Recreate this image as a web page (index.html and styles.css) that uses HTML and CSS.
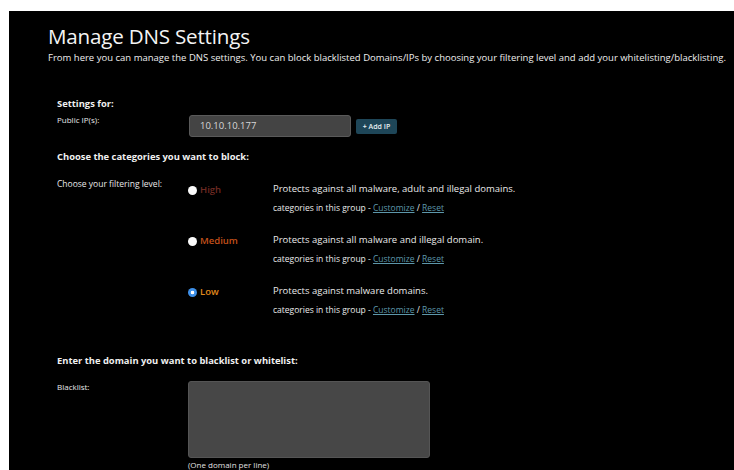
FILE: index.html
```html
<!DOCTYPE html>
<html lang="en">
<head>
<meta charset="utf-8">
<title>Manage DNS Settings</title>
<link rel="stylesheet" href="styles.css">
</head>
<body>
<main class="panel">
  <h1 class="title">Manage DNS Settings</h1>
  <p class="intro">From here you can manage the DNS settings. You can block blacklisted Domains/IPs by choosing your filtering level and add your whitelisting/blacklisting.</p>

  <section class="form">
    <h2 class="heading heading-first">Settings for:</h2>
    <div class="row row-ip">
      <label class="label label-ip">Public IP(s):</label>
      <div class="control ip-control">
        <div class="ip-input">10.10.10.177</div>
        <button class="add-btn" type="button"><span class="plus">+</span> Add IP</button>
      </div>
    </div>

    <h2 class="heading heading-cats">Choose the categories you want to block:</h2>
    <div class="row row-levels">
      <label class="label">Choose your filtering level:</label>
      <div class="control levels">
        <div class="level">
          <div class="level-name"><span class="radio"></span><span class="name name-high">High</span></div>
          <div class="level-desc">
            <div>Protects against all malware, adult and illegal domains.</div>
            <div class="cats">categories in this group - <a href="#">Customize</a> / <a href="#">Reset</a></div>
          </div>
        </div>
        <div class="level">
          <div class="level-name"><span class="radio"></span><span class="name name-medium">Medium</span></div>
          <div class="level-desc">
            <div>Protects against all malware and illegal domain.</div>
            <div class="cats">categories in this group - <a href="#">Customize</a> / <a href="#">Reset</a></div>
          </div>
        </div>
        <div class="level">
          <div class="level-name"><span class="radio radio-on"></span><span class="name name-low">Low</span></div>
          <div class="level-desc">
            <div>Protects against malware domains.</div>
            <div class="cats">categories in this group - <a href="#">Customize</a> / <a href="#">Reset</a></div>
          </div>
        </div>
      </div>
    </div>

    <h2 class="heading heading-domains">Enter the domain you want to blacklist or whitelist:</h2>
    <div class="row row-black">
      <label class="label label-black">Blacklist:</label>
      <div class="control">
        <div class="textarea"></div>
        <div class="note">(One domain per line)</div>
      </div>
    </div>
  </section>
</main>
</body>
</html>
```

FILE: styles.css
```css
html, body {
  margin: 0;
  padding: 0;
  background: #ffffff;
  height: 100%;
  overflow: hidden;
}

body {
  padding: 11px 0 0 9px;
  box-sizing: border-box;
  font-family: "Open Sans", "Liberation Sans", sans-serif;
}

.panel {
  background: #000000;
  color: #eeeeee;
  height: 100%;
  padding: 12px 0 0 39px;
  box-sizing: border-box;
}

.title {
  margin: 0;
  font-size: 20.6px;
  font-weight: 400;
  line-height: 27px;
  color: #f4f4f4;
  letter-spacing: -0.2px;
}

.intro {
  margin: 2px 0 0;
  font-size: 9.52px;
  line-height: 12px;
  color: #eeeeee;
  white-space: nowrap;
}

.form {
  padding-left: 9px;
}

.heading {
  margin: 0;
  font-size: 9.4px;
  font-weight: 700;
  line-height: 12px;
  color: #f0f0f0;
}

.heading-first { margin-top: 34px; }
.heading-cats { margin-top: 14px; }
.heading-domains { margin-top: 39px; }

.row {
  display: flex;
  align-items: flex-start;
}

.label {
  width: 131px;
  flex: none;
  font-size: 8.5px;
  line-height: 10px;
  color: #e8e8e8;
}

.row-ip { margin-top: 5px; }
.label-ip {
  margin-top: 0;
  font-size: 8px;
}

.ip-control {
  display: flex;
  align-items: center;
  gap: 5px;
}

.ip-input {
  width: 150px;
  height: 20px;
  background: #444444;
  border: 1px solid #5a5a5a;
  border-radius: 3px;
  padding: 0 0 0 10px;
  font-size: 9.5px;
  line-height: 20px;
  color: #d8d8d8;
  margin-left: 1px;
}

.add-btn {
  font-family: inherit;
  height: 15px;
  width: 41px;
  padding: 0;
  border: 0;
  border-radius: 2px;
  background: #1e4658;
  color: #e6eef2;
  font-size: 7px;
  font-weight: 600;
  line-height: 15px;
}

.plus {
  font-weight: 700;
}

.row-levels { margin-top: 16px; }

.levels {
  display: flex;
  flex-direction: column;
  gap: 16px;
}

.level {
  display: flex;
  align-items: flex-start;
}

.level-name {
  width: 85px;
  flex: none;
  display: flex;
  align-items: center;
  gap: 3px;
  margin-top: 6px;
}

.radio {
  width: 9px;
  height: 9px;
  border-radius: 50%;
  background: #fafafa;
  flex: none;
}

.radio-on {
  background: radial-gradient(circle, #ffffff 0 1.5px, #3d8fe8 2.1px);
}

.name {
  font-size: 9.5px;
  line-height: 10px;
  font-weight: 600;
}

.name-high { color: #6e2a22; }
.name-medium { color: #c4501a; }
.name-low { color: #e08a1c; }

.level-desc {
  margin-top: 4px;
  font-size: 9.5px;
  line-height: 12px;
  color: #eaeaea;
}

.cats {
  margin-top: 7px;
  font-size: 8.5px;
}

.cats a {
  color: #5d97aa;
  text-decoration: underline;
}

.row-black { margin-top: 14px; }
.label-black { margin-top: 1px; font-size: 8px; }

.textarea {
  width: 240px;
  height: 75px;
  background: #474747;
  border: 1px solid #555555;
  border-radius: 3px;
}

.note {
  font-size: 8px;
  line-height: 10px;
  color: #e0e0e0;
  margin-top: 2px;
}
```
